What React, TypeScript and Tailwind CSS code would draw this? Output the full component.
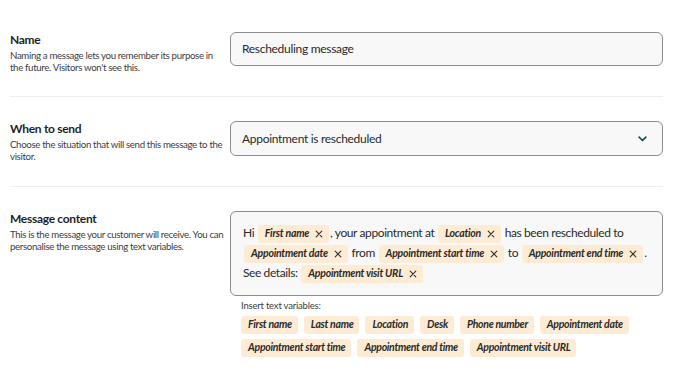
import React from 'react';

const X = () => (
  <svg viewBox="0 0 10 10" className="w-[8px] h-[8px] ml-[6px] shrink-0" fill="none" stroke="#333" strokeWidth="1.4" strokeLinecap="round">
    <path d="M1.5 1.5 L8.5 8.5 M8.5 1.5 L1.5 8.5" />
  </svg>
);

const Tag: React.FC<{ label: string }> = ({ label }) => (
  <span className="inline-flex items-center h-[18px] pl-[7px] pr-[6px] rounded-[3px] bg-[#fdebd4] text-[10.5px] tracking-[-0.25px] font-bold italic text-[#2a2a2a] align-middle mx-[1px]">
    {label}
    <X />
  </span>
);

const Var: React.FC<{ label: string }> = ({ label }) => (
  <span className="inline-flex items-center h-[18px] pl-[7px] pr-[6px] rounded-[3px] bg-[#fdebd4] text-[10.5px] tracking-[-0.3px] font-bold italic text-[#2a2a2a]">
    {label}
  </span>
);

const Label: React.FC<{ title: string; children: React.ReactNode }> = ({ title, children }) => (
  <div className="w-[216px] shrink-0">
    <h2 className="text-[12px] font-bold tracking-[-0.3px] text-[#1f1f1f] leading-[16px]">{title}</h2>
    <p className="text-[9.7px] tracking-[-0.35px] leading-[12px] text-[#3d3d3d] mt-[1px]">{children}</p>
  </div>
);

export default function App() {
  const vars = [
    'First name',
    'Last name',
    'Location',
    'Desk',
    'Phone number',
    'Appointment date',
    'Appointment start time',
    'Appointment end time',
    'Appointment visit URL',
  ];
  return (
    <div className="w-[688px] h-[376px] bg-white px-[10px] pt-[32px] overflow-hidden" style={{ fontFamily: 'Lato, "Noto Sans", sans-serif' }}>
      <div className="w-[653px]">
        <div className="flex items-start gap-[4px] pb-[23px] border-b border-[#edf0f0]">
          <Label title="Name">Naming a message lets you remember its purpose in the future. Visitors won't see this.</Label>
          <div className="flex-1 h-[34px] rounded-[6px] border border-[#8c8c8c] bg-[#f8f8f8] flex items-center px-[11px] text-[12px] tracking-[-0.3px] text-[#2a2a2a]">
            Rescheduling message
          </div>
        </div>
        <div className="flex items-start gap-[4px] pt-[24px] pb-[24px] border-b border-[#edf0f0]">
          <Label title="When to send">Choose the situation that will send this message to the visitor.</Label>
          <div className="flex-1 h-[35px] rounded-[6px] border border-[#8c8c8c] bg-[#f8f8f8] flex items-center justify-between px-[11px] text-[12px] tracking-[-0.3px] text-[#2a2a2a]">
            Appointment is rescheduled
            <svg viewBox="0 0 12 8" className="w-[9px] h-[6px] mr-[4px]" fill="none" stroke="#0f4f4f" strokeWidth="2.2" strokeLinecap="round" strokeLinejoin="round">
              <path d="M1.5 1.5 L6 6 L10.5 1.5" />
            </svg>
          </div>
        </div>
        <div className="flex items-start gap-[4px] pt-[24px]">
          <Label title="Message content">This is the message your customer will receive. You can personalise the message using text variables.</Label>
          <div className="flex-1">
            <div className="h-[85px] rounded-[6px] border border-[#8c8c8c] bg-[#f8f8f8] pl-[12px] pt-[11px] text-[12px] tracking-[-0.4px] leading-[19px] text-[#2a2a2a]">
              <div className="whitespace-nowrap">
                Hi <Tag label="First name" />, your appointment at <Tag label="Location" /> has been rescheduled to
              </div>
              <div className="whitespace-nowrap">
                <Tag label="Appointment date" /> from <Tag label="Appointment start time" /> to <Tag label="Appointment end time" />.
              </div>
              <div className="whitespace-nowrap">
                See details: <Tag label="Appointment visit URL" />
              </div>
            </div>
            <div className="pl-[11px] pt-[4px]">
              <p className="text-[9.5px] tracking-[-0.2px] text-[#3d3d3d] leading-[12px]">Insert text variables:</p>
              <div className="flex flex-wrap gap-x-[6px] gap-y-[5px] mt-[4px] w-[405px]">
                {vars.map((v) => (
                  <Var key={v} label={v} />
                ))}
              </div>
            </div>
          </div>
        </div>
      </div>
    </div>
  );
}
